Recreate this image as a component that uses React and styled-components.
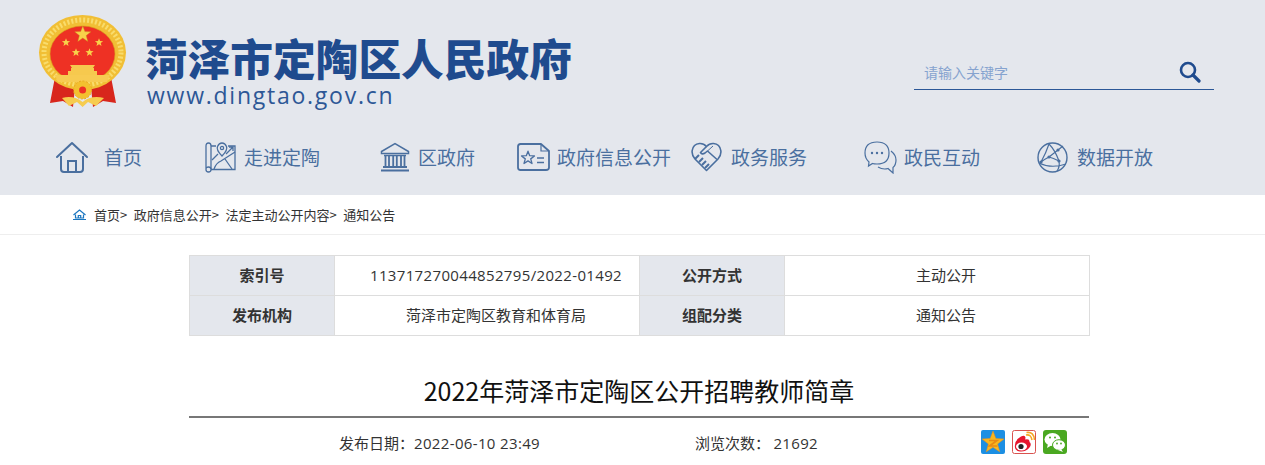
import styled, { createGlobalStyle } from "styled-components";

const NAV_COLOR = "#4a6f9f";

const GlobalStyle = createGlobalStyle`
    html, body {
        margin: 0;
        padding: 0;
        background: #fff;
        overflow: hidden;
    }
    body {
        font-family: "Noto Sans CJK SC", "Liberation Sans", sans-serif;
        color: #333;
    }
`;

const starPoints = (cx, cy, r) => {
    const pts = [];
    for (let i = 0; i < 10; i++) {
        const rad = i % 2 === 0 ? r : r * 0.42;
        const a = -Math.PI / 2 + (i * Math.PI) / 5;
        pts.push(`${(cx + rad * Math.cos(a)).toFixed(2)},${(cy + rad * Math.sin(a)).toFixed(2)}`);
    }
    return pts.join(" ");
};

const Emblem = () => (
    <svg width="90" height="94" viewBox="0 0 90 94">
        <path d="M17 62 L12 88 L25 86 L35 92 L37 72 Z" fill="#d8261c" />
        <path d="M73 62 L78 88 L65 86 L55 92 L53 72 Z" fill="#d8261c" />
        <ellipse cx="44.5" cy="37.5" rx="43.5" ry="37.5" fill="#f1bf35" />
        <ellipse cx="44.5" cy="37.5" rx="38.5" ry="32.5" fill="none" stroke="#f9dc6c" strokeWidth="5" strokeDasharray="2 2" />
        <ellipse cx="44.5" cy="39" rx="32.5" ry="28" fill="#ee3124" stroke="#d99a1b" strokeWidth=".6" />
        <polygon points={starPoints(44.8, 19.5, 8.5)} fill="#f8d24a" stroke="#c88e1c" strokeWidth=".4" />
        <polygon points={starPoints(28, 27.5, 4.3)} fill="#f8d24a" />
        <polygon points={starPoints(61, 27.5, 4.3)} fill="#f8d24a" />
        <polygon points={starPoints(38, 37.5, 4.3)} fill="#f8d24a" />
        <polygon points={starPoints(51.5, 37.5, 4.3)} fill="#f8d24a" />
        <path d="M32 50 H57 L55 53 H56 V56 H59 V60 H30 V56 H33 V53 H34 Z" fill="#f6c94e" />
        <path d="M17 60 H72 L69 67 H20 Z" fill="#f7cb52" />
        <circle cx="44.6" cy="75" r="9" fill="#f3c02f" stroke="#e9a91f" strokeDasharray="2 1.5" />
        <circle cx="44.6" cy="75" r="3.5" fill="#ee3124" />
        <path d="M24 83 Q36 80 44.6 87 Q53 80 66 83 L58 91 L50 87 L44.6 92 L39 87 L31 91 Z" fill="#f6cc4f" />
    </svg>
);

const SearchIcon = () => (
    <svg width="22" height="22" viewBox="0 0 22 22" fill="none" stroke="#1f4b8e">
        <circle cx="9" cy="9" r="7" strokeWidth="2.6" />
        <path d="M14 14 L20 20" strokeWidth="3.2" strokeLinecap="round" />
    </svg>
);

const HomeIcon = () => (
    <svg width="34" height="32" viewBox="0 0 34 32" fill="none" stroke={NAV_COLOR} strokeWidth="2">
        <path d="M2 16 L17 2 L32 16" strokeLinecap="round" strokeLinejoin="round" />
        <path d="M6 15 V28 Q6 31 9 31 H25 Q28 31 28 28 V15" />
        <path d="M13 31 V20 H21 V31" />
    </svg>
);

const MapIcon = () => (
    <svg width="31" height="31" viewBox="0 0 31 31" fill="none" stroke={NAV_COLOR} strokeWidth="1.3">
        <path d="M1 4 Q1 1 3.5 1 Q6 1 6 4 V27" />
        <path d="M1 4 V27.5 Q1 30 3.5 30 Q6 30 6 27.5 Q6 25 3.5 25 Q1 25 1 27.5" />
        <path d="M6 4 H11 M23 4 H30 V27.5 H6" />
        <path d="M17 14 Q11 8 12.5 4.5 Q14 1 17 1 Q20 1 21.5 4.5 Q23 8 17 14 Z" />
        <circle cx="17" cy="6" r="1.6" />
        <path d="M9 27 Q11 21 16 19 L30 10 M20 17 L27 27 M13 12 L7 18 M28 5 L21 12 M24 5 H28 V9" />
    </svg>
);

const BankIcon = () => (
    <svg width="30" height="30" viewBox="0 0 30 30" fill="none" stroke={NAV_COLOR} strokeWidth="1.5">
        <path d="M1.5 9.5 L15 1.5 L28.5 9.5 V11.5 H1.5 Z" />
        <path d="M4 13.5 H26" />
        <path d="M5.5 14 V24 M9 14 V24 M13.2 14 V24 M16.8 14 V24 M21 14 V24 M24.5 14 V24" strokeWidth="1.8" />
        <path d="M3 25 H27 M1 28.5 H29" strokeWidth="2" />
    </svg>
);

const DocIcon = () => (
    <svg width="33" height="28" viewBox="0 0 33 28" fill="none" stroke={NAV_COLOR} strokeWidth="1.8">
        <path d="M24 1 H3.5 Q1 1 1 3.5 V24.5 Q1 27 3.5 27 H29 Q32 27 32 24.5 V8 Z" strokeLinejoin="round" />
        <path d="M24 1 V8 H32" strokeWidth="1.2" />
        <polygon points={starPoints(11, 15, 6.8)} strokeWidth="1.3" strokeLinejoin="round" />
        <path d="M20 15 H27 M20 19.5 H27" strokeWidth="1.5" />
    </svg>
);

const HeartIcon = () => (
    <svg width="31" height="30" viewBox="0 0 31 30" fill="none" stroke={NAV_COLOR} strokeWidth="1.6" strokeLinejoin="round">
        <path d="M15.5 28.5 L4 17 Q0.5 13 1.2 8.5 Q2.2 2 8.5 1.5 Q12.5 1.2 15.5 4.5 Q18.5 1.2 22.5 1.5 Q28.8 2 29.8 8.5 Q30.5 13 27 17 Z" />
        <path d="M15.5 4.5 L9.5 10.5 Q11 13 14 11 L16.5 9 L26 17.5" />
        <path d="M4 17 L8 13 M8 20 L12 16 M11 23 L15 19 M14 26 L18 22" strokeWidth="2" />
        <path d="M16.5 9 L22 4" strokeWidth="1" />
    </svg>
);

const ChatIcon = () => (
    <svg width="33" height="33" viewBox="0 0 33 33" fill="none" stroke={NAV_COLOR} strokeWidth="1.2">
        <path d="M5 21 Q1 17.5 1 12 Q1 1 13 1 Q25 1 25 12 Q25 23 13 23 Q10 23 8.5 22.5 L4.5 25 Z" />
        <path d="M27 10 Q32 14 32 19 Q32 24 29 26.5 L29 32 L24 27.5 Q19 29 14 26" />
        <circle cx="8" cy="12" r="1.2" fill={NAV_COLOR} stroke="none" />
        <circle cx="13" cy="12" r="1.2" fill={NAV_COLOR} stroke="none" />
        <circle cx="18" cy="12" r="1.2" fill={NAV_COLOR} stroke="none" />
    </svg>
);

const GlobeIcon = () => (
    <svg width="31" height="31" viewBox="0 0 31 31" fill="none" stroke={NAV_COLOR} strokeWidth="1.2">
        <circle cx="15.5" cy="15.5" r="14.5" strokeWidth="1.4" />
        <path d="M12 2 Q9 11 4 20 M12 2 Q18 8 22 19 Q23 25 20 29 M4 20 Q8 17 12 15 Q16 16 22 19 M2 21 Q14 27 29 22 M12 15 L21 8 L26 4" />
        <circle cx="21" cy="8" r="1.6" fill={NAV_COLOR} stroke="none" />
        <circle cx="12" cy="15" r="1.6" fill={NAV_COLOR} stroke="none" />
        <circle cx="4" cy="20" r="1.6" fill={NAV_COLOR} stroke="none" />
        <circle cx="22" cy="19" r="1.6" fill={NAV_COLOR} stroke="none" />
    </svg>
);

const CrumbHome = () => (
    <svg width="13" height="11" viewBox="0 0 13 11" fill="none" stroke="#1a76c0" strokeWidth="1.2">
        <path d="M0.5 6 L6.5 1 L12.5 6" />
        <path d="M2.5 5.5 V9 H10.5 V5.5 M5.3 9 V6.5 H7.7 V9 M0 10.5 H13" />
    </svg>
);

const QzoneIcon = () => (
    <svg width="24" height="24" viewBox="0 0 24 24">
        <rect width="24" height="24" rx="2" fill="#1c8fe3" />
        <polygon points={starPoints(12, 12.5, 11.5)} fill="#f9b71e" stroke="#f08f14" strokeWidth=".5" />
        <path d="M8 10.5 H16 L8.5 16 H16.5" fill="none" stroke="#e98a13" strokeWidth="1.7" />
    </svg>
);

const WeiboIcon = () => (
    <svg width="24" height="24" viewBox="0 0 24 24">
        <rect x=".5" y=".5" width="23" height="23" rx="2" fill="#fff" stroke="#d9534f" />
        <path d="M3 15 Q3 10 9 6.5 Q13 4.5 13.5 7.5 L13.2 9.5 Q18 8.5 17.5 12 Q20 14 17.5 17.5 Q14 22 8 21.5 Q2 20.5 3 15 Z" fill="#e6162d" />
        <ellipse cx="9.5" cy="16.5" rx="5.5" ry="4" fill="#fff" />
        <circle cx="9" cy="16.5" r="2.6" fill="#222" />
        <path d="M14 5 Q19 4 20 10 M14.5 2.5 Q22 1.5 22.5 10" fill="none" stroke="#f5a623" strokeWidth="1.6" />
    </svg>
);

const WechatIcon = () => (
    <svg width="24" height="24" viewBox="0 0 24 24">
        <rect width="24" height="24" rx="3" fill="#4aa821" />
        <ellipse cx="9.5" cy="9.5" rx="8" ry="6.5" fill="#fff" />
        <path d="M5 14 L4 18 L9 15 Z" fill="#fff" />
        <ellipse cx="16" cy="15" rx="6.5" ry="5.3" fill="#fff" stroke="#4aa821" />
        <path d="M18 19 L20 22 L15 20 Z" fill="#fff" />
        <circle cx="7" cy="7.5" r="1" fill="#4aa821" />
        <circle cx="12" cy="7.5" r="1" fill="#4aa821" />
        <circle cx="14" cy="13.5" r=".9" fill="#4aa821" />
        <circle cx="18" cy="13.5" r=".9" fill="#4aa821" />
    </svg>
);

const navItems = [
    { label: "首页", icon: <HomeIcon />, width: 150, gap: 15 },
    { label: "走进定陶", icon: <MapIcon />, width: 175, gap: 8 },
    { label: "区政府", icon: <BankIcon />, width: 137, gap: 8 },
    { label: "政府信息公开", icon: <DocIcon />, width: 174, gap: 7 },
    { label: "政务服务", icon: <HeartIcon />, width: 173, gap: 9 },
    { label: "政民互动", icon: <ChatIcon />, width: 173, gap: 7 },
    { label: "数据开放", icon: <GlobeIcon />, width: 173, gap: 9 },
];

const App = () => {
    return (
        <Page>
            <GlobalStyle />
            <Header>
                <TopRow>
                    <Emblem />
                    <Brand>
                        <SiteName>菏泽市定陶区人民政府</SiteName>
                        <SiteUrl>www.dingtao.gov.cn</SiteUrl>
                    </Brand>
                    <SearchBox>
                        <SearchText>请输入关键字</SearchText>
                        <SearchIcon />
                    </SearchBox>
                </TopRow>
                <Nav>
                    {navItems.map((item) => (
                        <NavItem key={item.label} $width={item.width} $gap={item.gap}>
                            {item.icon}
                            <NavLabel>{item.label}</NavLabel>
                        </NavItem>
                    ))}
                </Nav>
            </Header>
            <Breadcrumb>
                <CrumbHome />
                <span>首页&gt; 政府信息公开&gt; 法定主动公开内容&gt; 通知公告</span>
            </Breadcrumb>
            <Content>
                <InfoTable>
                    <colgroup>
                        <col width="145" />
                        <col width="305" />
                        <col width="145" />
                        <col width="305" />
                    </colgroup>
                    <tbody>
                        <tr>
                            <LabelCell>索引号</LabelCell>
                            <ValueCell><Num>113717270044852795/2022-01492</Num></ValueCell>
                            <LabelCell>公开方式</LabelCell>
                            <ValueCell>主动公开</ValueCell>
                        </tr>
                        <tr>
                            <LabelCell>发布机构</LabelCell>
                            <ValueCell>菏泽市定陶区教育和体育局</ValueCell>
                            <LabelCell>组配分类</LabelCell>
                            <ValueCell>通知公告</ValueCell>
                        </tr>
                    </tbody>
                </InfoTable>
                <ArticleTitle>2022年菏泽市定陶区公开招聘教师简章</ArticleTitle>
                <MetaRow>
                    <MetaDate>发布日期：<Num>2022-06-10 23:49</Num></MetaDate>
                    <MetaViews>浏览次数： <Num>21692</Num></MetaViews>
                    <ShareRow>
                        <QzoneIcon />
                        <WeiboIcon />
                        <WechatIcon />
                    </ShareRow>
                </MetaRow>
            </Content>
        </Page>
    );
};

const Page = styled.div`
    width: 1265px;
    height: 465px;
    overflow: hidden;
`;

const Header = styled.header`
    height: 195px;
    background: #e4e7ed;
`;

const TopRow = styled.div`
    display: flex;
    align-items: flex-start;
    height: 130px;
    padding: 15px 51px 0 38px;
    box-sizing: border-box;
`;

const Brand = styled.div`
    margin-left: 17px;
    padding-top: 15px;
`;

const SiteName = styled.div`
    font-size: 42.7px;
    line-height: 54px;
    font-weight: 900;
    color: #1f4b8e;
    white-space: nowrap;
`;

const SiteUrl = styled.div`
    font-family: "Open Sans", sans-serif;
    font-size: 23px;
    line-height: 22px;
    letter-spacing: 1.75px;
    color: #2d5796;
    margin-left: 2px;
`;

const SearchBox = styled.div`
    display: flex;
    align-items: center;
    justify-content: space-between;
    width: 300px;
    height: 35px;
    margin-left: auto;
    margin-top: 40px;
    padding: 0 13px 0 10px;
    box-sizing: border-box;
    border-bottom: 1px solid #2b5797;
`;

const SearchText = styled.span`
    font-size: 14px;
    color: #86a3cf;
`;

const Nav = styled.nav`
    display: flex;
    align-items: center;
    height: 54px;
    padding-left: 55px;
`;

const NavItem = styled.div`
    display: flex;
    align-items: center;
    flex: none;
    width: ${(props) => props.$width}px;
    gap: ${(props) => props.$gap}px;
    font-size: 19px;
    color: ${NAV_COLOR};
    white-space: nowrap;
`;

const NavLabel = styled.span`
    padding-bottom: 2px;
`;

const Breadcrumb = styled.div`
    display: flex;
    align-items: center;
    gap: 8px;
    height: 39px;
    padding-left: 73px;
    font-size: 13px;
    word-spacing: 3.6px;
    color: #333;
    border-bottom: 1px solid #eee;
`;

const Content = styled.main`
    width: 901px;
    margin-left: 189px;
    padding-top: 20px;
`;

const Num = styled.span`
    font-family: "Open Sans", sans-serif;
    letter-spacing: 0.35px;
`;

const InfoTable = styled.table`
    width: 900px;
    table-layout: fixed;
    border-collapse: collapse;
    font-size: 15px;
`;

const LabelCell = styled.td`
    height: 40px;
    padding: 0 0 3px;
    box-sizing: border-box;
    text-align: center;
    font-weight: 700;
    background: #e4e7ed;
    border: 1px solid #ddd;
    color: #333;
`;

const ValueCell = styled.td`
    height: 40px;
    padding: 0 0 3px 18px;
    box-sizing: border-box;
    text-align: center;
    border: 1px solid #ddd;
    color: #333;
`;

const ArticleTitle = styled.h1`
    width: 900px;
    margin: 36px 0 0;
    height: 44px;
    line-height: 37px;
    font-size: 25px;
    font-weight: 400;
    text-align: center;
    color: #111;
    border-bottom: 2px solid #777;
    box-sizing: content-box;
`;

const MetaRow = styled.div`
    display: flex;
    align-items: center;
    padding: 12px 0 0 150px;
    font-size: 15px;
    color: #333;
`;

const MetaDate = styled.span`
    width: 356px;
    flex: none;
`;

const MetaViews = styled.span`
    width: 286px;
    flex: none;
`;

const ShareRow = styled.div`
    display: flex;
    gap: 7px;
`;

export default App;
